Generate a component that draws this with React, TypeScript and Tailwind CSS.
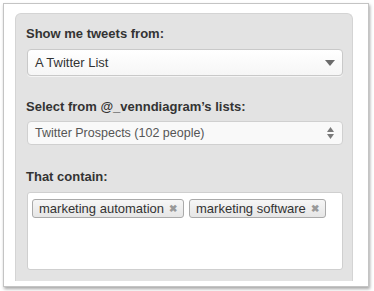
const tags = ['marketing automation', 'marketing software'];

function CaretDown() {
  return (
    <svg width="10" height="6" viewBox="0 0 10 6" className="shrink-0">
      <path d="M0 0 L10 0 L5 6 Z" fill="#6b6b6b" />
    </svg>
  );
}

function UpDown() {
  return (
    <svg width="7" height="12" viewBox="0 0 7 12" className="shrink-0">
      <path d="M0 5 L7 5 L3.5 0 Z" fill="#7a7a7a" />
      <path d="M0 7 L7 7 L3.5 12 Z" fill="#7a7a7a" />
    </svg>
  );
}

export default function App() {
  return (
    <div className="h-[291px] w-[374px] overflow-hidden bg-white pl-[3px] pt-[3px] font-['Liberation_Sans',Arial,sans-serif]">
      <div className="h-[284px] w-[366px] overflow-hidden border border-[#c4c4c4] bg-white pl-[11px] pt-[9px] shadow-[1px_2px_3px_rgba(0,0,0,0.35)]">
        <div className="h-[268px] w-[338px] rounded-t-[6px] border border-b-0 border-[#d4d4d4] bg-[#e3e3e3] px-[10px] pt-[11px]">
          <div className="text-[13px] font-bold leading-[18px] text-[#333]">Show me tweets from:</div>
          <div className="mt-[6px] ml-[1px] flex h-[27px] w-[316px] items-center justify-between rounded-[4px] border border-[#c9c9c9] bg-gradient-to-b from-white to-[#f6f6f6] pl-[7px] pr-[7px] shadow-[0_1px_0_rgba(255,255,255,0.6)]">
            <span className="text-[13px] text-[#333]">A Twitter List</span>
            <CaretDown />
          </div>

          <div className="mt-[22px] text-[13px] font-bold leading-[18px] text-[#333]">Select from @_venndiagram’s lists:</div>
          <div className="mt-[5px] ml-[1px] flex h-[24px] w-[316px] items-center justify-between rounded-[4px] border border-[#d0d0d0] bg-[#f9f9f9] pl-[7px] pr-[8px]">
            <span className="text-[12.5px] text-[#555]">Twitter Prospects (102 people)</span>
            <UpDown />
          </div>

          <div className="mt-[23px] text-[13px] font-bold leading-[18px] text-[#333]">That contain:</div>
          <div className="mt-[6px] ml-[1px] flex h-[78px] w-[316px] flex-wrap content-start gap-[5px] rounded-[3px] border border-[#cfcfcf] bg-white px-[4px] pt-[6px]">
            {tags.map((tag) => (
              <span
                key={tag}
                className="flex h-[19px] items-center gap-[5px] rounded-[3px] border border-[#aaa] bg-gradient-to-b from-[#f6f6f6] to-[#e6e6e6] pl-[6px] pr-[6px] text-[13px] leading-none text-[#333]"
              >
                {tag}
                <span className="text-[10px] font-bold text-[#999]">✖</span>
              </span>
            ))}
          </div>
        </div>
      </div>
    </div>
  );
}
